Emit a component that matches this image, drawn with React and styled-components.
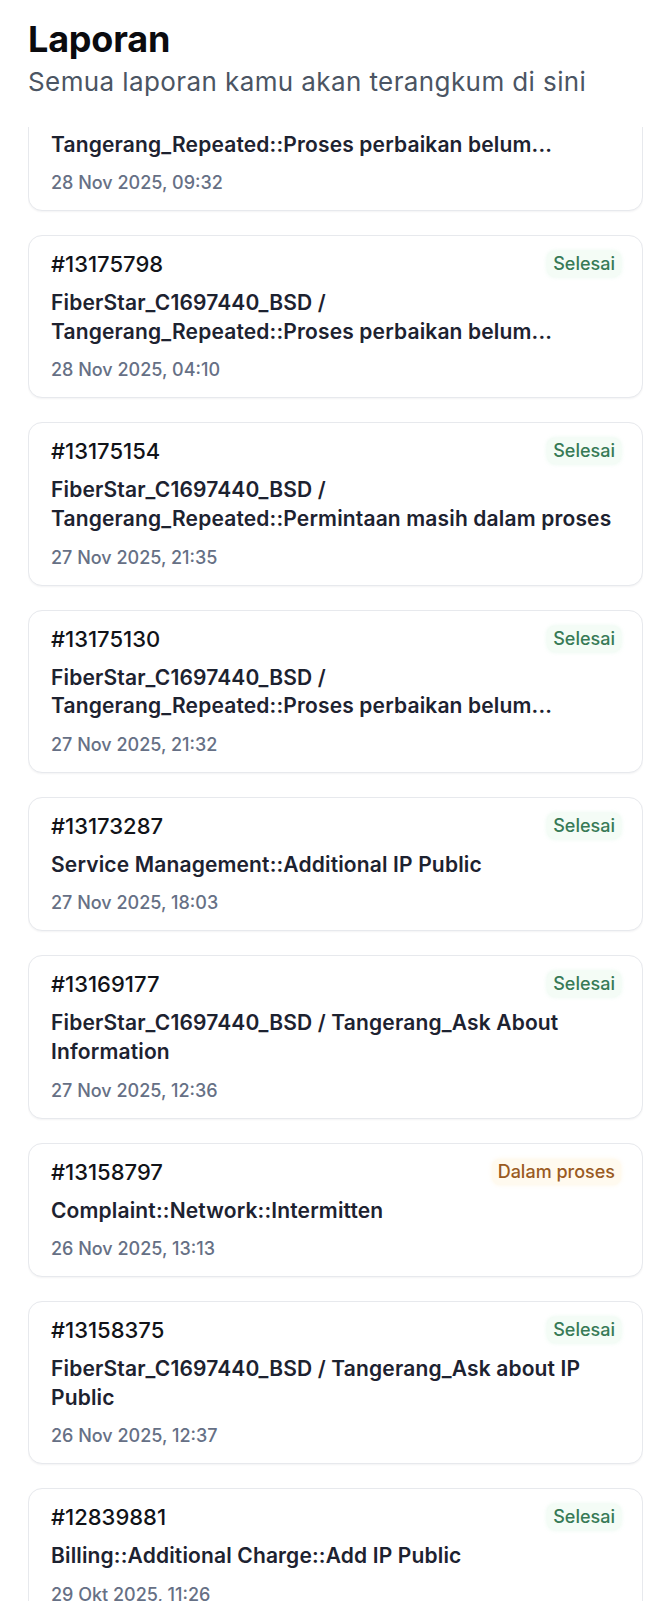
import React, { useEffect, useRef } from "react";
import styled, { createGlobalStyle } from "styled-components";

const Global = createGlobalStyle`
  html, body { margin: 0; padding: 0; background: #ffffff; }
  body { font-family: Inter, "Noto Sans", "Liberation Sans", sans-serif; -webkit-font-smoothing: antialiased; }
  * { box-sizing: border-box; }
`;

const Page = styled.div`
  height: 100vh;
  display: flex;
  flex-direction: column;
  padding: 0 14px 0 28px;
  background: #fff;
  overflow: hidden;
`;

const Header = styled.header`
  padding: 19px 0 29px;
  flex: none;
`;

const Title = styled.h1`
  margin: 0;
  font-size: 36px;
  line-height: 40px;
  font-weight: 700;
  color: #0b0b0f;
  letter-spacing: -0.2px;
`;

const Subtitle = styled.p`
  margin: 7px 0 0;
  font-size: 26px;
  line-height: 32px;
  font-weight: 400;
  letter-spacing: 0.4px;
  color: #4b5563;
`;

const Viewport = styled.div`
  flex: 1;
  min-height: 0;
  overflow: hidden;
`;

const List = styled.ul`
  list-style: none;
  margin: 0;
  padding: 0 0 24px;
  display: flex;
  flex-direction: column;
  gap: 24px;
`;

const Card = styled.li`
  border: 1px solid #e7e9ed;
  border-radius: 14px;
  background: #fff;
  padding: 15px 21px 15px 22px;
  box-shadow: 0 1px 2px rgba(16, 24, 40, 0.05);
  display: flex;
  flex-direction: column;
  gap: 12px;
`;

const TopRow = styled.div`
  height: 26px;
  display: flex;
  align-items: center;
  justify-content: space-between;
`;

const Ticket = styled.span`
  font-size: 22px;
  font-weight: 500;
  color: #111318;
`;

const tones = {
  done: { fg: "#377a56", bg: "#f4fcf6", glow: "rgba(220, 245, 228, 0.7)" },
  progress: { fg: "#9a5a22", bg: "#fffaef", glow: "rgba(255, 240, 210, 0.6)" },
};

const Status = styled.span`
  font-size: 18px;
  line-height: 24px;
  font-weight: 500;
  padding: 1px 6px;
  border-radius: 8px;
  color: ${(p) => tones[p.$tone].fg};
  background: ${(p) => tones[p.$tone].bg};
  box-shadow: 0 0 4px ${(p) => tones[p.$tone].glow};
`;

const Subject = styled.div`
  font-size: 21px;
  line-height: 28.6px;
  font-weight: 600;
  letter-spacing: 0.15px;
  color: #1d2230;
  white-space: pre-line;
  display: -webkit-box;
  -webkit-line-clamp: 2;
  -webkit-box-orient: vertical;
  overflow: hidden;
`;

const DateText = styled.div`
  font-size: 18px;
  line-height: 24px;
  font-weight: 500;
  color: #667085;
`;

const reports = [
  { id: "13176001", status: "done", subject: "FiberStar_C1697440_BSD /\nTangerang_Repeated::Proses perbaikan belum...", date: "28 Nov 2025, 09:32" },
  { id: "13175798", status: "done", subject: "FiberStar_C1697440_BSD /\nTangerang_Repeated::Proses perbaikan belum...", date: "28 Nov 2025, 04:10" },
  { id: "13175154", status: "done", subject: "FiberStar_C1697440_BSD /\nTangerang_Repeated::Permintaan masih dalam proses", date: "27 Nov 2025, 21:35" },
  { id: "13175130", status: "done", subject: "FiberStar_C1697440_BSD /\nTangerang_Repeated::Proses perbaikan belum...", date: "27 Nov 2025, 21:32" },
  { id: "13173287", status: "done", subject: "Service Management::Additional IP Public", date: "27 Nov 2025, 18:03" },
  { id: "13169177", status: "done", subject: "FiberStar_C1697440_BSD / Tangerang_Ask About Information", date: "27 Nov 2025, 12:36" },
  { id: "13158797", status: "progress", subject: "Complaint::Network::Intermitten", date: "26 Nov 2025, 13:13" },
  { id: "13158375", status: "done", subject: "FiberStar_C1697440_BSD / Tangerang_Ask about IP Public", date: "26 Nov 2025, 12:37" },
  { id: "12839881", status: "done", subject: "Billing::Additional Charge::Add IP Public", date: "29 Okt 2025, 11:26" },
  { id: "12839002", status: "done", subject: "Billing::Additional Charge::Add IP Public", date: "28 Okt 2025, 10:02" },
];

const labels = { done: "Selesai", progress: "Dalam proses" };

export default function App() {
  const ref = useRef(null);
  useEffect(() => {
    if (ref.current) ref.current.scrollTop = 79;
  }, []);
  return (
    <>
      <Global />
      <Page>
        <Header>
          <Title>Laporan</Title>
          <Subtitle>Semua laporan kamu akan terangkum di sini</Subtitle>
        </Header>
        <Viewport ref={ref}>
          <List>
            {reports.map((r) => (
              <Card key={r.id}>
                <TopRow>
                  <Ticket>#{r.id}</Ticket>
                  <Status $tone={r.status}>{labels[r.status]}</Status>
                </TopRow>
                <Subject>{r.subject}</Subject>
                <DateText>{r.date}</DateText>
              </Card>
            ))}
          </List>
        </Viewport>
      </Page>
    </>
  );
}
